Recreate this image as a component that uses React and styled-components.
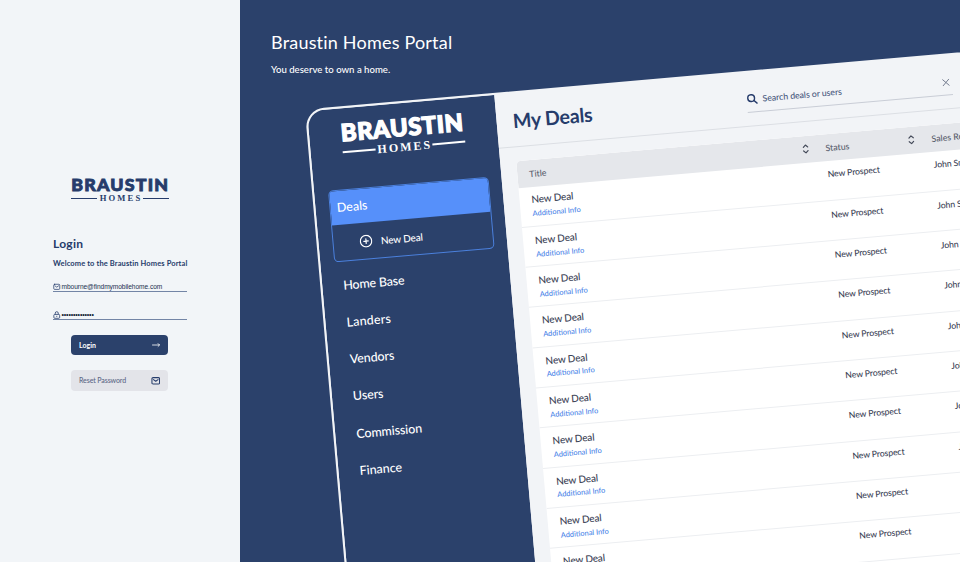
import React from "react";
import styled, { createGlobalStyle } from "styled-components";

const NAVY = "#2b416b";
const INK = "#263c6b";

const Global = createGlobalStyle`
  * { box-sizing: border-box; }
  body { margin: 0; background: #f2f5f8; font-family: Lato, "Open Sans", sans-serif; }
`;

const Page = styled.div`
  display: flex;
  width: 960px;
  height: 562px;
  overflow: hidden;
`;

/* ---------- Logo ---------- */

const LogoBox = styled.div`
  width: ${(p) => p.$w}px;
  color: ${(p) => p.$color};
`;
const LogoName = styled.div`
  font: 900 ${(p) => p.$size}px/${(p) => p.$line}px Lato, sans-serif;
  letter-spacing: ${(p) => p.$track}px;
  white-space: nowrap;
  -webkit-text-stroke: ${(p) => p.$stroke}px currentColor;
`;
const LogoSub = styled.div`
  display: flex;
  align-items: center;
  height: ${(p) => p.$line}px;
  font: 700 ${(p) => p.$size}px/${(p) => p.$line}px "Liberation Serif", serif;
  gap: ${(p) => p.$gap}px;
`;
const LogoWord = styled.span`
  letter-spacing: ${(p) => p.$track}px;
  margin-right: -${(p) => p.$track}px;
`;
const Rule = styled.span`
  flex: 1;
  height: ${(p) => p.$thick}px;
  background: currentColor;
`;

function Logo({ small }) {
  const s = small
    ? { w: 97.5, color: INK, size: 17.8, line: 18, track: 1.2, stroke: 0.9, sub: 8.6, subLine: 11, subTrack: 2.1, gap: 2.5, thick: 1 }
    : { w: 123, color: "#fff", size: 23.8, line: 25, track: 0.6, stroke: 1.3, sub: 12, subLine: 14, subTrack: 2.05, gap: 2, thick: 1.5 };
  return (
    <LogoBox $w={s.w} $color={s.color}>
      <LogoName $size={s.size} $line={s.line} $track={s.track} $stroke={s.stroke}>BRAUSTIN</LogoName>
      <LogoSub $size={s.sub} $line={s.subLine} $gap={s.gap}>
        <Rule $thick={s.thick} />
        <LogoWord $track={s.subTrack}>HOMES</LogoWord>
        <Rule $thick={s.thick} />
      </LogoSub>
    </LogoBox>
  );
}

/* ---------- Login panel ---------- */

const LoginPanel = styled.aside`
  flex: none;
  width: 240px;
  padding: 175px 53px 0;
  background: #f2f5f8;
  color: ${INK};
`;
const PanelLogo = styled.div`
  display: flex;
  justify-content: center;
  height: 61px;
`;
const LoginTitle = styled.h1`
  margin: 0;
  font-size: 12px;
  font-weight: 700;
  line-height: 16px;
  letter-spacing: 0.27px;
`;
const Welcome = styled.p`
  margin: 7px 0 0;
  font-size: 7.5px;
  font-weight: 700;
  line-height: 10px;
  letter-spacing: 0.12px;
  white-space: nowrap;
`;
const Field = styled.label`
  display: flex;
  align-items: center;
  gap: 1px;
  height: 12px;
  margin-top: ${(p) => p.$top}px;
  padding-top: 2px;
  border-bottom: 1px solid #7385a6;
  font: 400 6.6px/9px "Liberation Sans", sans-serif;
  letter-spacing: -0.06px;
  color: #22304f;
  svg { flex: none; }
`;
const Dots = styled.span`
  font: 400 7px/9px "Liberation Sans", sans-serif;
  letter-spacing: -0.15px;
  color: #111a30;
`;
const Button = styled.button`
  display: flex;
  align-items: center;
  justify-content: space-between;
  width: 97px;
  height: ${(p) => (p.$primary ? 20.5 : 21.5)}px;
  margin: 14.5px 0 0 18px;
  padding: 0 8px;
  border: 0;
  border-radius: 4px;
  background: ${(p) => (p.$primary ? NAVY : "#e3e4e9")};
  color: ${(p) => (p.$primary ? "#fff" : "#5b6785")};
  font: ${(p) => (p.$primary ? 700 : 500)} 7px/10px Lato, sans-serif;
  letter-spacing: ${(p) => (p.$primary ? 0.03 : -0.1)}px;
`;

const MailIcon = ({ size, color = INK, stroke = 1 }) => (
  <svg width={size} height={size} viewBox="0 0 10 10" fill="none" stroke={color} strokeWidth={stroke} strokeLinejoin="round" strokeLinecap="round">
    <rect x="1" y="1.7" width="8" height="6.8" rx="1.2" />
    <path d="M2.6 3.8 5 5.5 7.4 3.8" />
  </svg>
);
const LockIcon = () => (
  <svg width="7.5" height="8" viewBox="0 0 7 8" fill="none" stroke={INK} strokeWidth="0.8">
    <rect x="0.6" y="3.4" width="5.8" height="3.9" rx="0.9" />
    <path d="M2 3.4V2.2a1.5 1.5 0 0 1 3 0v1.2M3.5 4.8v1.1" />
  </svg>
);
const ArrowIcon = () => (
  <svg width="8" height="6" viewBox="0 0 8 6" fill="none" stroke="#fff" strokeWidth="0.8" strokeLinecap="round" strokeLinejoin="round">
    <path d="M0.5 3h7M6.1 1.6 7.5 3 6.1 4.4" />
  </svg>
);

/* ---------- Hero ---------- */

const Hero = styled.main`
  flex: 1;
  min-width: 0;
  height: 562px;
  overflow: hidden;
  background: ${NAVY};
  color: #fff;
`;
const HeroText = styled.header`
  height: 110px;
  padding: 30px 0 0 31px;
`;
const HeroTitle = styled.h2`
  margin: 0;
  font-size: 18px;
  font-weight: 400;
  line-height: 24px;
  letter-spacing: 0.2px;
`;
const HeroLead = styled.p`
  margin: 9px 0 0;
  font-size: 9.6px;
  font-weight: 500;
  line-height: 13px;
`;

const Tablet = styled.div`
  display: flex;
  width: 720px;
  height: 560px;
  margin-left: 64px;
  border: 2px solid #f2f4f7;
  border-radius: 19px;
  overflow: hidden;
  background: #f2f4f7;
  transform: translate(0.9px, -0.6px) rotate(-5deg);
  transform-origin: 0.8px 0.8px;
`;
const Sidebar = styled.nav`
  flex: none;
  width: 188.4px;
  padding-left: 13.8px;
  background: ${NAVY};
`;
const SidebarLogo = styled.div`
  height: 80.8px;
  padding: 12px 0 0 18px;
`;
const ActiveGroup = styled.div`
  width: 161px;
  height: 72px;
  border: 1px solid #4b80dd;
  border-radius: 5px;
  overflow: hidden;
`;
const ActiveItem = styled.div`
  height: 34.5px;
  padding: 0 0 0 6.5px;
  background: #5690fa;
  font-size: 12.5px;
  font-weight: 500;
  line-height: 34px;
`;
const SubItem = styled.div`
  display: flex;
  align-items: center;
  gap: 8px;
  height: 36.5px;
  padding-left: 26.5px;
  font-size: 10px;
  font-weight: 500;
  letter-spacing: -0.15px;
`;
const NavList = styled.div`
  padding: 4.8px 0 0 7.2px;
`;
const NavItem = styled.div`
  height: 37.24px;
  font-size: 12.5px;
  font-weight: 500;
  line-height: 37.24px;
  letter-spacing: ${(p) => p.$track}px;
`;

const PlusIcon = () => (
  <svg width="13" height="13" viewBox="0 0 13 13" fill="none" stroke="#fff" strokeWidth="1.2" strokeLinecap="round">
    <circle cx="6.5" cy="6.5" r="5.7" />
    <path d="M6.5 4.3v4.4M4.3 6.5h4.4" />
  </svg>
);

/* ---------- Deals ---------- */

const Deals = styled.section`
  flex: 1;
  min-width: 0;
  background: #f2f4f7;
  color: #3c4356;
`;
const DealsHeader = styled.div`
  display: flex;
  align-items: flex-start;
  height: 54.3px;
  padding-left: 15.9px;
  border-bottom: 1px solid #dcdfe4;
`;
const DealsTitle = styled.h3`
  width: 234.6px;
  margin: 0;
  color: ${INK};
  font-size: 19.6px;
  font-weight: 700;
  line-height: 55px;
  letter-spacing: -0.25px;
`;
const Search = styled.div`
  display: flex;
  align-items: center;
  gap: 5px;
  width: 206px;
  height: 26px;
  margin-top: 13.5px;
  padding: 1px 2px 0 0;
  border-bottom: 1px solid #c9cdd6;
  color: #4a5a80;
  font-size: 8.8px;
  font-weight: 500;
  letter-spacing: -0.07px;
`;
const SearchText = styled.span`
  flex: 1;
`;
const SearchIcon = () => (
  <svg width="11" height="11" viewBox="0 0 11 11" fill="none" stroke={INK} strokeWidth="1.4" strokeLinecap="round">
    <circle cx="4.6" cy="4.6" r="3.4" />
    <path d="m7.2 7.2 2.9 2.9" />
  </svg>
);
const CloseIcon = () => (
  <svg width="8" height="8" viewBox="0 0 8 8" fill="none" stroke="#6e7689" strokeWidth="0.9" strokeLinecap="round">
    <path d="m1 1 6 6M7 1 1 7" />
  </svg>
);
const SortIcon = () => (
  <svg width="7" height="10" viewBox="0 0 7 10" fill="none" stroke="#454b5a" strokeWidth="1.2" strokeLinecap="round" strokeLinejoin="round">
    <path d="M1.3 3.2 3.5 1.1l2.2 2.1M1.3 6.8l2.2 2.1 2.2-2.1" />
  </svg>
);

const Table = styled.div`
  width: 560px;
  margin: 13.7px 0 0 15.9px;
  border-radius: 5px;
  overflow: hidden;
  background: #fff;
`;
const Columns = styled.div`
  display: grid;
  grid-template-columns: 297.4px 106.4px 1fr;
  padding-left: 11.6px;
`;
const HeadRow = styled(Columns)`
  align-items: center;
  height: 26.6px;
  background: #e5e7eb;
  color: #5a606d;
  font-size: 8.8px;
  font-weight: 500;
`;
const HeadCell = styled.div`
  display: flex;
  align-items: center;
  justify-content: space-between;
  padding-right: 16.5px;
`;
const Row = styled(Columns)`
  height: 40.3px;
  padding-top: 6.9px;
  border-bottom: 1px solid #eceef1;
`;
const DealName = styled.div`
  font-size: 10px;
  font-weight: 500;
  line-height: 13px;
  letter-spacing: -0.15px;
`;
const DealInfo = styled.div`
  margin-top: 2.8px;
  color: #4a84e8;
  font-size: 7.4px;
  font-weight: 500;
  line-height: 10px;
`;
const Cell = styled.div`
  font-size: 8.7px;
  font-weight: 500;
  line-height: 13px;
  letter-spacing: -0.12px;
`;

const NAV = [
  ["Home Base", -0.18],
  ["Landers", 0.17],
  ["Vendors", -0.1],
  ["Users", -0.11],
  ["Commission", -0.12],
  ["Finance", -0.02],
];
const ROWS = Array.from({ length: 11 }, (_, id) => ({ id, name: "New Deal", status: "New Prospect", rep: "John Smith" }));

export default function App() {
  return (
    <Page>
      <Global />
      <LoginPanel>
        <PanelLogo><Logo small /></PanelLogo>
        <LoginTitle>Login</LoginTitle>
        <Welcome>Welcome to the Braustin Homes Portal</Welcome>
        <Field $top={11}>
          <MailIcon size={7.5} />
          <span>mbourne@findmymobilehome.com</span>
        </Field>
        <Field $top={16}>
          <LockIcon />
          <Dots>••••••••••••••</Dots>
        </Field>
        <Button $primary>Login<ArrowIcon /></Button>
        <Button>Reset Password<MailIcon size={9.5} stroke={1.1} /></Button>
      </LoginPanel>

      <Hero>
        <HeroText>
          <HeroTitle>Braustin Homes Portal</HeroTitle>
          <HeroLead>You deserve to own a home.</HeroLead>
        </HeroText>
        <Tablet>
          <Sidebar>
            <SidebarLogo><Logo /></SidebarLogo>
            <ActiveGroup>
              <ActiveItem>Deals</ActiveItem>
              <SubItem><PlusIcon />New Deal</SubItem>
            </ActiveGroup>
            <NavList>
              {NAV.map(([label, track]) => (
                <NavItem key={label} $track={track}>{label}</NavItem>
              ))}
            </NavList>
          </Sidebar>
          <Deals>
            <DealsHeader>
              <DealsTitle>My Deals</DealsTitle>
              <Search>
                <SearchIcon />
                <SearchText>Search deals or users</SearchText>
                <CloseIcon />
              </Search>
            </DealsHeader>
            <Table>
              <HeadRow>
                <HeadCell>Title<SortIcon /></HeadCell>
                <HeadCell>Status<SortIcon /></HeadCell>
                <HeadCell>Sales Rep</HeadCell>
              </HeadRow>
              {ROWS.map((row) => (
                <Row key={row.id}>
                  <div>
                    <DealName>{row.name}</DealName>
                    <DealInfo>Additional Info</DealInfo>
                  </div>
                  <Cell>{row.status}</Cell>
                  <Cell>{row.rep}</Cell>
                </Row>
              ))}
            </Table>
          </Deals>
        </Tablet>
      </Hero>
    </Page>
  );
}
